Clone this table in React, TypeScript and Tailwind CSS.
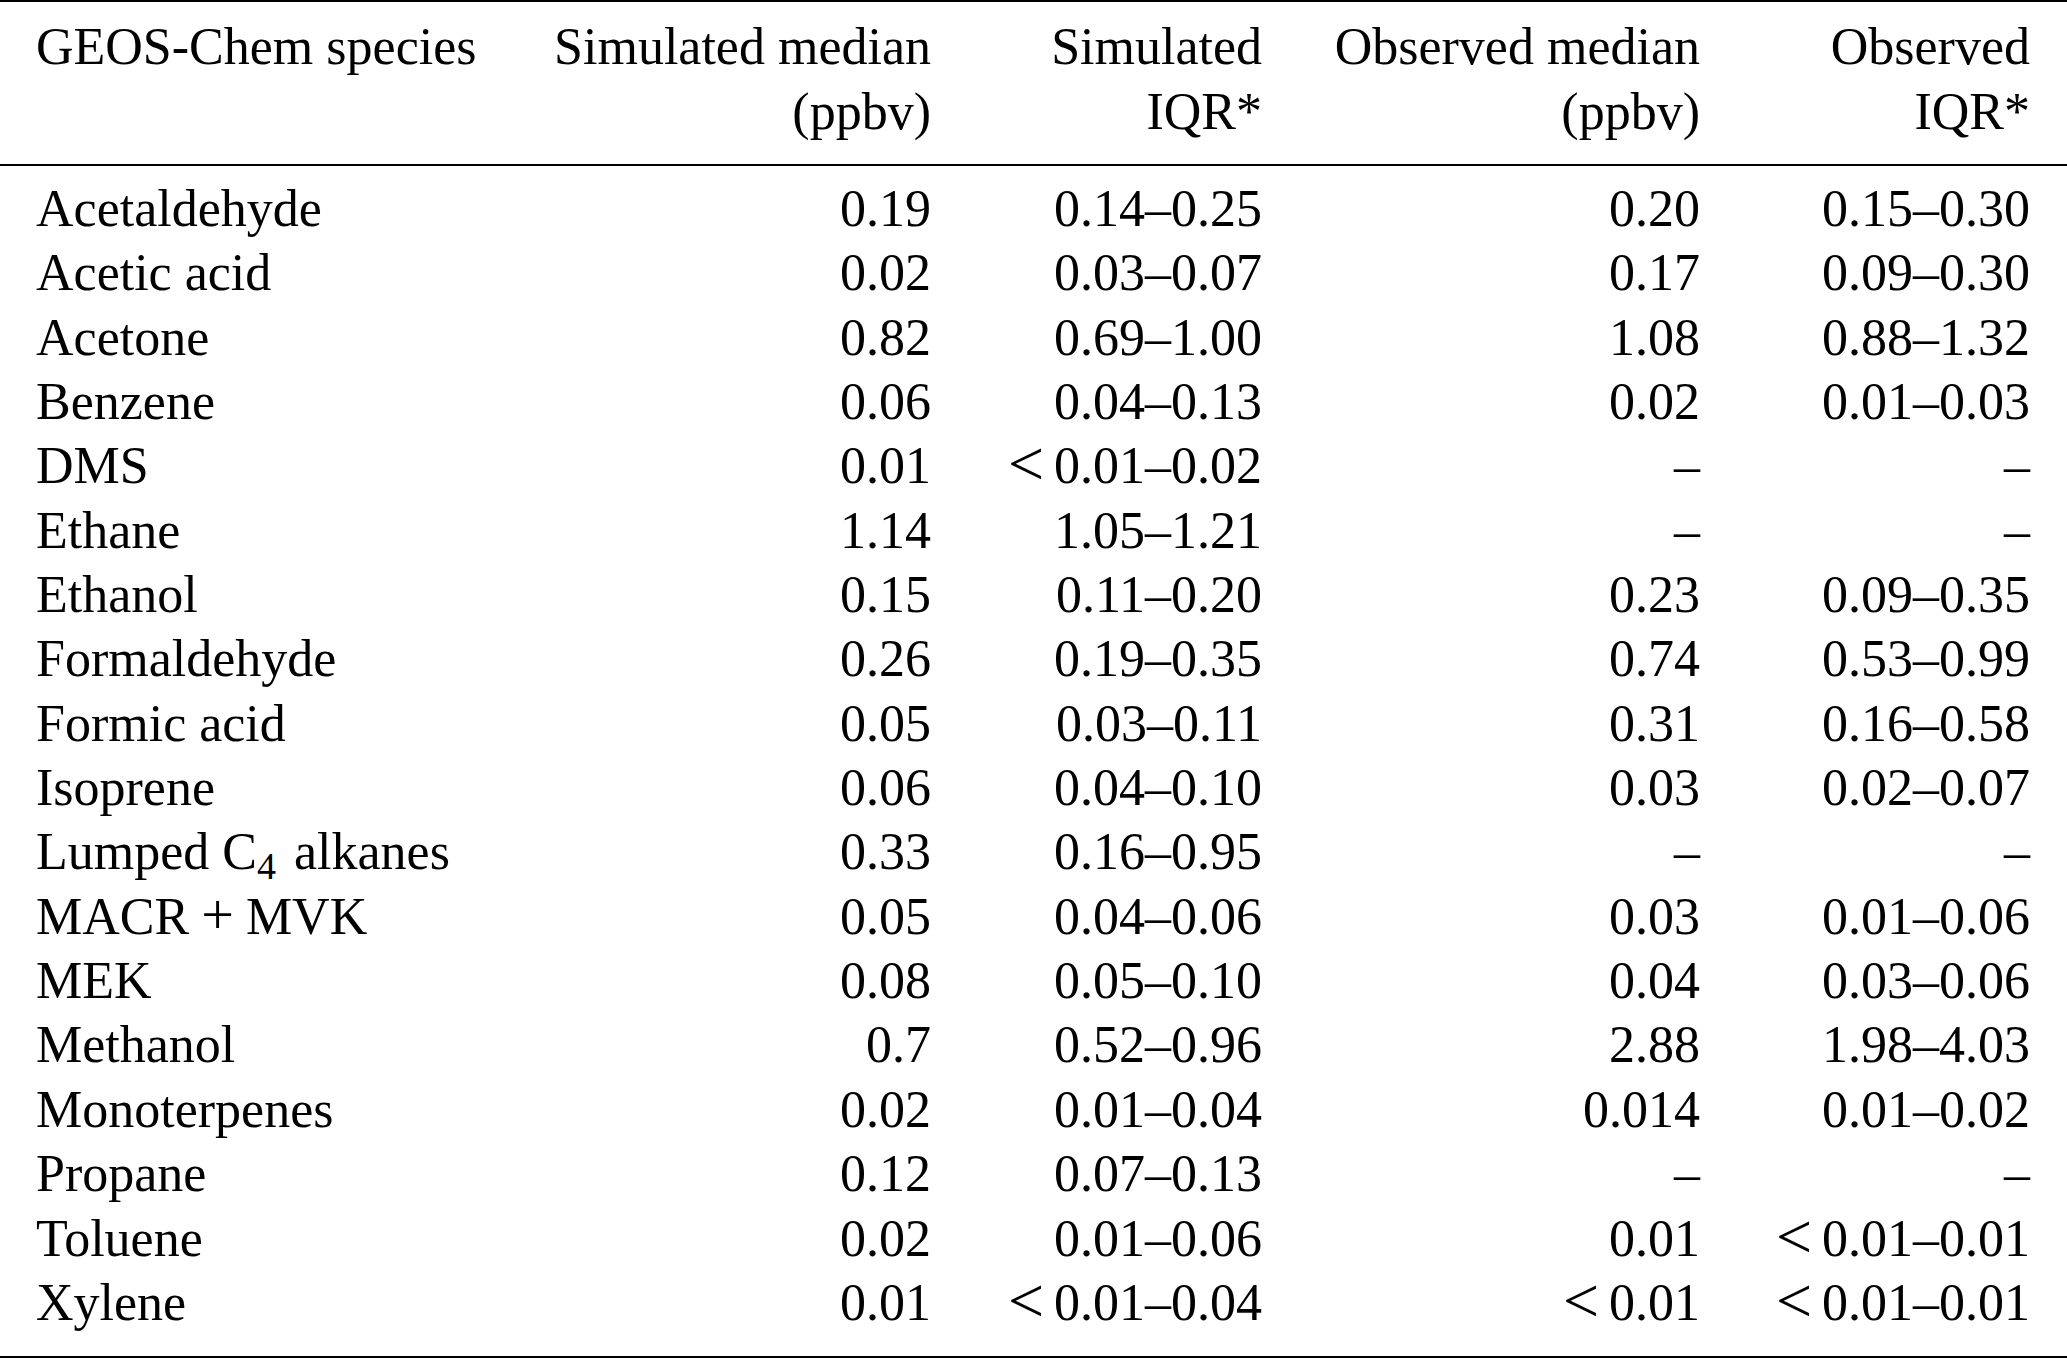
import React from 'react';

type Row = {
  name: React.ReactNode;
  simMedian: string;
  simIqr: string;
  obsMedian: string;
  obsIqr: string;
};

const rows: Row[] = [
  { name: 'Acetaldehyde', simMedian: '0.19', simIqr: '0.14–0.25', obsMedian: '0.20', obsIqr: '0.15–0.30' },
  { name: 'Acetic acid', simMedian: '0.02', simIqr: '0.03–0.07', obsMedian: '0.17', obsIqr: '0.09–0.30' },
  { name: 'Acetone', simMedian: '0.82', simIqr: '0.69–1.00', obsMedian: '1.08', obsIqr: '0.88–1.32' },
  { name: 'Benzene', simMedian: '0.06', simIqr: '0.04–0.13', obsMedian: '0.02', obsIqr: '0.01–0.03' },
  { name: 'DMS', simMedian: '0.01', simIqr: '<0.01–0.02', obsMedian: '–', obsIqr: '–' },
  { name: 'Ethane', simMedian: '1.14', simIqr: '1.05–1.21', obsMedian: '–', obsIqr: '–' },
  { name: 'Ethanol', simMedian: '0.15', simIqr: '0.11–0.20', obsMedian: '0.23', obsIqr: '0.09–0.35' },
  { name: 'Formaldehyde', simMedian: '0.26', simIqr: '0.19–0.35', obsMedian: '0.74', obsIqr: '0.53–0.99' },
  { name: 'Formic acid', simMedian: '0.05', simIqr: '0.03–0.11', obsMedian: '0.31', obsIqr: '0.16–0.58' },
  { name: 'Isoprene', simMedian: '0.06', simIqr: '0.04–0.10', obsMedian: '0.03', obsIqr: '0.02–0.07' },
  {
    name: (
      <>
        Lumped C<sub className="text-[38px] mr-[5px]">4</sub> alkanes
      </>
    ),
    simMedian: '0.33',
    simIqr: '0.16–0.95',
    obsMedian: '–',
    obsIqr: '–',
  },
  {
    name: (
      <>
        MACR<span className="px-[12px] text-[58px] leading-[0] font-light">+</span>MVK
      </>
    ),
    simMedian: '0.05',
    simIqr: '0.04–0.06',
    obsMedian: '0.03',
    obsIqr: '0.01–0.06',
  },
  { name: 'MEK', simMedian: '0.08', simIqr: '0.05–0.10', obsMedian: '0.04', obsIqr: '0.03–0.06' },
  { name: 'Methanol', simMedian: '0.7', simIqr: '0.52–0.96', obsMedian: '2.88', obsIqr: '1.98–4.03' },
  { name: 'Monoterpenes', simMedian: '0.02', simIqr: '0.01–0.04', obsMedian: '0.014', obsIqr: '0.01–0.02' },
  { name: 'Propane', simMedian: '0.12', simIqr: '0.07–0.13', obsMedian: '–', obsIqr: '–' },
  { name: 'Toluene', simMedian: '0.02', simIqr: '0.01–0.06', obsMedian: '0.01', obsIqr: '<0.01–0.01' },
  { name: 'Xylene', simMedian: '0.01', simIqr: '<0.01–0.04', obsMedian: '<0.01', obsIqr: '<0.01–0.01' },
];

const cols = 'grid grid-cols-[494px_401px_331px_438px_330px] pl-[36px] pr-[37px]';

// values below detection get a math-style "<"
function Val({ v }: { v: string }) {
  if (v.startsWith('<')) {
    return (
      <>
        <span className="relative top-[2px] pr-[10px] text-[64px] leading-[0] font-light">&lt;</span>
        {v.slice(1)}
      </>
    );
  }
  return <>{v}</>;
}

export default function App() {
  return (
    <div className="w-[2067px] h-[1360px] bg-white text-black font-['Liberation_Serif','Times_New_Roman',serif] text-[52px] overflow-hidden">
      <div className="border-t-[2px] border-black" />

      {/* Header */}
      <div className={`${cols} pt-[12px] pb-[20px] leading-[65px] whitespace-nowrap`}>
        <div>GEOS-Chem species</div>
        <div className="text-right">
          Simulated median
          <br />
          (ppbv)
        </div>
        <div className="text-right">
          Simulated
          <br />
          IQR*
        </div>
        <div className="text-right">
          Observed median
          <br />
          (ppbv)
        </div>
        <div className="text-right">
          Observed
          <br />
          IQR*
        </div>
      </div>

      <div className="border-t-[2px] border-black" />

      {/* Body */}
      <div className="pt-[11px] pb-[21px] leading-[64.35px] whitespace-nowrap">
        {rows.map((r, i) => (
          <div key={i} className={`${cols} h-[64.35px]`}>
            <div>{r.name}</div>
            <div className="text-right"><Val v={r.simMedian} /></div>
            <div className="text-right"><Val v={r.simIqr} /></div>
            <div className="text-right"><Val v={r.obsMedian} /></div>
            <div className="text-right"><Val v={r.obsIqr} /></div>
          </div>
        ))}
      </div>

      <div className="border-t-[2px] border-black" />
    </div>
  );
}
